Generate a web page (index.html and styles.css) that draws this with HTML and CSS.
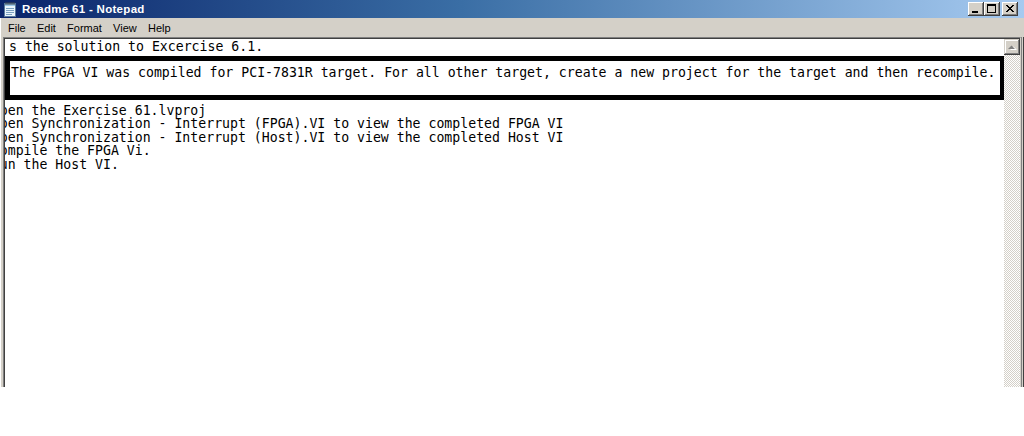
FILE: index.html
```html
<!DOCTYPE html>
<html>
<head>
<meta charset="utf-8">
<title>Readme 61 - Notepad</title>
<link rel="stylesheet" href="styles.css">
</head>
<body>
<div class="window">
  <div class="titlebar">
    <svg class="app-icon" width="16" height="16" viewBox="0 0 16 16">
      <rect x="2.5" y="2.5" width="11" height="13" fill="#e8f4fc" stroke="#5a7a9a"/>
      <rect x="3" y="3" width="10" height="2" fill="#9cc8e8"/>
      <path d="M4 7.5h8M4 9.5h8M4 11.5h8M4 13.5h6" stroke="#7aa0c0" stroke-width="1"/>
      <path d="M4 1v3M6 1v3M8 1v3M10 1v3M12 1v3" stroke="#404850" stroke-width="1"/>
    </svg>
    <span class="title">Readme 61 - Notepad</span>
    <div class="caption-buttons">
      <div class="cbtn">
        <svg width="16" height="14" viewBox="0 0 16 14"><rect x="4" y="9" width="6" height="2" fill="#000"/></svg>
      </div>
      <div class="cbtn">
        <svg width="16" height="14" viewBox="0 0 16 14"><rect x="3.5" y="2.5" width="8" height="8" fill="none" stroke="#000"/><rect x="3" y="2" width="9" height="2" fill="#000"/></svg>
      </div>
      <div class="cbtn close">
        <svg width="16" height="14" viewBox="0 0 16 14"><path d="M4 3l7 7M5 3l7 7M11 3l-7 7M12 3l-7 7" stroke="#000" stroke-width="1"/></svg>
      </div>
    </div>
  </div>
  <div class="menubar">
    <span class="menu-item">File</span>
    <span class="menu-item">Edit</span>
    <span class="menu-item">Format</span>
    <span class="menu-item">View</span>
    <span class="menu-item">Help</span>
  </div>
  <div class="client">
    <div class="edit">
      <div class="edit-inner">
        <div class="text">
          <div class="line first">s the solution to Excercise 6.1.</div>
          <div class="note">The FPGA VI was compiled for PCI-7831R target. For all other target, create a new project for the target and then recompile.</div>
          <div class="steps">
            <div class="line">1. Open the Exercise 61.lvproj</div>
            <div class="line">2. Open Synchronization - Interrupt (FPGA).VI to view the completed FPGA VI</div>
            <div class="line">3. Open Synchronization - Interrupt (Host).VI to view the completed Host VI</div>
            <div class="line">4. Compile the FPGA Vi.</div>
            <div class="line">5. Run the Host VI.</div>
          </div>
        </div>
        <div class="vscroll">
          <div class="sbtn">
            <svg width="12" height="10" viewBox="0 0 12 10"><path d="M3 7h7L6.5 3.5z" fill="#fff" transform="translate(1,1)"/><path d="M2 7h7L5.5 3.5z" fill="#808080"/></svg>
          </div>
          <div class="track"></div>
        </div>
      </div>
    </div>
  </div>
</div>
</body>
</html>
```

FILE: styles.css
```css
* { box-sizing: border-box; }
html, body { margin: 0; padding: 0; background: #fff; }
body { width: 1024px; height: 436px; overflow: hidden; }

.window {
  width: 1024px;
  height: 387px;
  display: flex;
  flex-direction: column;
  background: #d4d0c8;
}

.titlebar {
  height: 18px;
  flex: none;
  display: flex;
  align-items: center;
  background: linear-gradient(to right, #0a246a 0%, #3a6ea5 45%, #a6caf0 100%);
  padding-left: 2px;
}
.app-icon { flex: none; margin-top: -1px; }
.title {
  margin-left: 4px;
  color: #fff;
  font-family: "Liberation Sans", Arial, sans-serif;
  font-weight: bold;
  font-size: 11.5px;
  letter-spacing: 0.3px;
}
.caption-buttons {
  margin-left: auto;
  margin-right: 6px;
  display: flex;
  align-items: center;
}
.cbtn {
  width: 16px;
  height: 14px;
  background: #d4d0c8;
  box-shadow: inset -1px -1px #404040, inset 1px 1px #fff, inset -2px -2px #808080;
  display: flex;
}
.cbtn.close { margin-left: 2px; }

.menubar {
  height: 19px;
  flex: none;
  display: flex;
  align-items: center;
  padding-left: 1px;
  font-family: "Liberation Sans", Arial, sans-serif;
  font-size: 11px;
  color: #000;
  border-left: 1px solid #fff;
}
.menu-item { padding: 0 5.2px 0 6px; }

.client {
  flex: 1;
  display: flex;
  border-left: 1px solid #fff;
  border-right: 1px solid #404040;
  min-height: 0;
}
.edit {
  flex: 1;
  margin-left: 2px;
  margin-right: 2px;
  border-left: 1px solid #808080;
  border-top: 1px solid #808080;
  border-right: 1px solid #d4d0c8;
  display: flex;
  min-height: 0;
  box-shadow: 1px 0 #808080;
}
.edit-inner {
  flex: 1;
  display: flex;
  border-left: 1px solid #404040;
  border-top: 1px solid #404040;
  background: #fff;
  min-height: 0;
}

.text {
  flex: 1;
  overflow: hidden;
  padding-top: 1px;
  font-family: "DejaVu Sans Mono", "Liberation Mono", monospace;
  font-size: 13.2px;
  line-height: 13.5px;
  color: #000;
}
.line, .note { white-space: pre; }
.line.first { padding-left: 4px; }
.note {
  margin-top: 2px;
  border: 5px solid #000;
  height: 44px;
  padding: 5px 0 0 1px;
  margin-left: 0;
  margin-right: -1px;
}
.steps {
  margin-top: 4px;
  margin-left: -37px;
}

.vscroll {
  width: 16px;
  flex: none;
  display: flex;
  flex-direction: column;
}
.sbtn {
  height: 16px;
  flex: none;
  background: #d4d0c8;
  box-shadow: inset -1px -1px #404040, inset 1px 1px #d4d0c8, inset -2px -2px #808080, inset 2px 2px #fff;
  display: flex;
  align-items: center;
  justify-content: center;
}
.track {
  flex: 1;
  background-color: #fff;
  background-image: conic-gradient(#d4d0c8 0 25%, #fff 0 50%, #d4d0c8 0 75%, #fff 0);
  background-size: 2px 2px;
}
```
